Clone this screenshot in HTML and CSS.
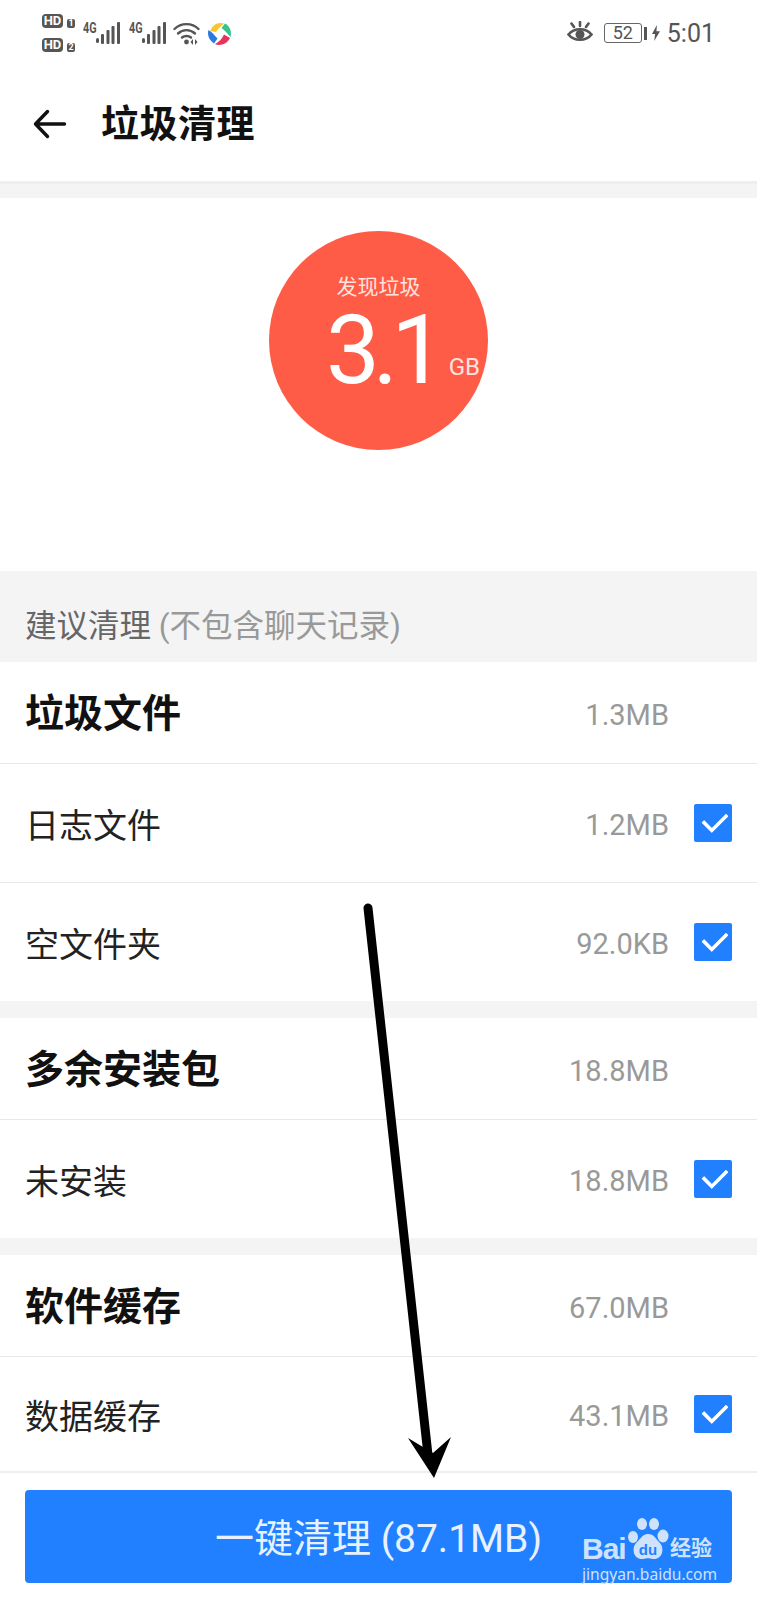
FILE: index.html
```html
<!DOCTYPE html>
<html lang="zh-CN">
<head>
  <meta charset="UTF-8">
  <title>垃圾清理</title>
  <link rel="stylesheet" href="styles.css">
</head>
<body>
  <div class="phone">

    <!-- Status bar -->
    <div class="status-bar">
      <div class="status-left">
        <div class="hd-stack">
          <div class="hd-line"><span class="hd-tag">HD</span><span class="sim-tag">1</span></div>
          <div class="hd-line"><span class="hd-tag">HD</span><span class="sim-tag">2</span></div>
        </div>
        <div class="signal"><span class="net">4G</span>
          <svg width="24" height="24" viewBox="0 0 24 24"><g fill="#555"><rect x="0" y="17" width="3" height="5" rx="1.500"/><rect x="5" y="13" width="3" height="10" rx="1"/><rect x="10.500" y="9" width="3" height="14" rx="1"/><rect x="15.500" y="5" width="3" height="18" rx="1"/><rect x="21" y="1" width="3" height="22" rx="1"/></g></svg>
        </div>
        <div class="signal"><span class="net">4G</span>
          <svg width="24" height="24" viewBox="0 0 24 24"><g fill="#555"><rect x="0" y="17" width="3" height="5" rx="1.500"/><rect x="5" y="13" width="3" height="10" rx="1"/><rect x="10.500" y="9" width="3" height="14" rx="1"/><rect x="15.500" y="5" width="3" height="18" rx="1"/><rect x="21" y="1" width="3" height="22" rx="1"/></g></svg>
        </div>
        <svg class="wifi" width="27" height="24" viewBox="0 0 27 24"><g fill="none" stroke="#555" stroke-width="2.400" stroke-linecap="round"><path d="M1.500 8C8 1.500 19 1.500 25.500 8"/><path d="M5 12.500C10 8 17 8 22 12.500"/><path d="M9 16.500C11.500 14.500 15.500 14.500 18 16.500"/></g><circle cx="13.500" cy="21" r="2.400" fill="#555"/><path d="M20 18v6l-2.500-3zM22 18v6l2.500-3z" fill="#555"/></svg>
        <svg class="app-logo" width="25" height="25" viewBox="0 0 25 25">
          <path d="M3.500 10C5 4 11 .5 17 2.500C14 5 11 8 9 11Z" fill="#f6c62f"/>
          <path d="M18 2.500C23 5 25 11 23.500 16C20 12 17.500 9 14.500 7Z" fill="#35c48d"/>
          <path d="M23 17C20 23 13 25.500 8 23C12 21 15 18 17 13.500Z" fill="#e8335d"/>
          <path d="M7 22.500C2 19 0 14 1.500 9C5 11 8 15 10.500 17.500Z" fill="#2a79e4"/>
        </svg>
      </div>
      <div class="status-right">
        <svg class="eye" width="26" height="22" viewBox="0 0 26 22"><g fill="none" stroke="#555" stroke-width="2.600"><path d="M1.500 13.500C7 6.500 19 6.500 24.500 13.500C19 20.500 7 20.500 1.500 13.500Z"/><path d="M13 1v4M4.500 2.500l2.500 3.500M21.500 2.500L19 6" stroke-linecap="round"/></g><circle cx="13" cy="13.500" r="4.500" fill="#555"/></svg>
        <div class="battery"><span class="battery-box">52</span><span class="battery-tip"></span></div>
        <svg class="bolt" width="8" height="18" viewBox="0 0 9 18"><path d="M5.500 0L0 10h3.500L2.500 18 9 7H5z" fill="#555"/></svg>
        <span class="clock">5:01</span>
      </div>
    </div>

    <!-- Title bar -->
    <div class="title-bar">
      <svg class="back" width="34" height="34" viewBox="0 0 34 34"><path d="M31.500 17H3M14.500 4.500L2.500 17L14.500 29.500" fill="none" stroke="#111" stroke-width="3.400" stroke-linecap="round" stroke-linejoin="round"/></svg>
      <h1>垃圾清理</h1>
    </div>
    <div class="band band-top"></div>

    <!-- Circle with the total -->
    <div class="hero">
      <div class="circle">
        <div class="circle-label">发现垃圾</div>
        <div class="circle-value"><span class="big">3.1</span><span class="unit">GB</span></div>
      </div>
    </div>

    <div class="section-head">建议清理 <span class="hint">(不包含聊天记录)</span></div>

    <div class="row group-row"><span class="name">垃圾文件</span><span class="size">1.3MB</span></div>
    <div class="row"><span class="name">日志文件</span><span class="size">1.2MB</span><span class="check"></span></div>
    <div class="row last"><span class="name">空文件夹</span><span class="size">92.0KB</span><span class="check"></span></div>
    <div class="band"></div>

    <div class="row group-row"><span class="name">多余安装包</span><span class="size">18.8MB</span></div>
    <div class="row last"><span class="name">未安装</span><span class="size">18.8MB</span><span class="check"></span></div>
    <div class="band"></div>

    <div class="row group-row"><span class="name">软件缓存</span><span class="size">67.0MB</span></div>
    <div class="row tail"><span class="name">数据缓存</span><span class="size">43.1MB</span><span class="check"></span></div>

    <!-- Bottom button -->
    <div class="footer">
      <button class="clean-btn">一键清理 (87.1MB)</button>
    </div>

    <!-- Arrow drawn over the screenshot -->
    <svg class="arrow" width="757" height="1600" viewBox="0 0 757 1600">
      <path d="M368 908L428 1455" fill="none" stroke="#000" stroke-width="9" stroke-linecap="round"/>
      <path d="M408 1438L434 1478L451 1437L433 1453Z" fill="#000"/>
    </svg>

    <!-- Watermark -->
    <div class="watermark">
      <div class="wm-top">
        <span class="wm-bai">Bai</span>
        <svg class="wm-paw" width="42" height="44" viewBox="0 0 42 44">
          <g fill="#cfe2fb"><ellipse cx="6" cy="19" rx="5" ry="6"/><ellipse cx="15" cy="6" rx="5" ry="6"/><ellipse cx="27" cy="6" rx="5" ry="6"/><ellipse cx="36" cy="18" rx="5.500" ry="6.500"/><path d="M21 16c6 0 8 5 12 9 5 6 2 17-7 16-4-1-6-1-10 0-9 1-12-10-7-16 4-3 6-9 12-9z"/></g>
          <text x="21" y="37" text-anchor="middle" class="wm-du">du</text>
        </svg>
        <span class="wm-cn">经验</span>
      </div>
      <div class="wm-url">jingyan.baidu.com</div>
    </div>
  </div>
</body>
</html>
```

FILE: styles.css
```css
/* Global Reset */
* {
  box-sizing: border-box;
  margin: 0;
  padding: 0;
}
body {
  font-family: Roboto, "Noto Sans CJK SC", sans-serif;
  background-color: #fff;
  color: #111;
}

.phone {
  position: relative;
  width: 757px;
  height: 1600px;
  overflow: hidden;
  background-color: #fff;
}

/* Status bar */
.status-bar {
  height: 66px;
  padding: 0 42px 0 42px;
  display: flex;
  justify-content: space-between;
  align-items: center;
}
.status-left,
.status-right {
  display: flex;
  align-items: center;
}
.hd-stack {
  display: flex;
  flex-direction: column;
  gap: 10px;
}
.hd-line {
  display: flex;
  align-items: flex-end;
  gap: 4px;
}
.hd-tag {
  background-color: #555;
  color: #fff;
  font-size: 13px;
  font-weight: 700;
  line-height: 14px;
  height: 14px;
  width: 21px;
  text-align: center;
  border-radius: 4px;
}
.sim-tag {
  background-color: #555;
  color: #fff;
  font-size: 9px;
  font-weight: 700;
  line-height: 9px;
  height: 9px;
  width: 8px;
  text-align: center;
  border-radius: 2px;
}
.signal {
  display: flex;
  align-items: flex-start;
  margin-left: 8px;
}
.signal + .signal {
  margin-left: 9px;
}
.net {
  font-size: 15px;
  font-weight: 700;
  color: #555;
  transform: scaleX(.72);
  transform-origin: left center;
  width: 13px;
  line-height: 14px;
  white-space: nowrap;
}
.wifi {
  margin-left: 7px;
}
.app-logo {
  margin-left: 7px;
}
.eye {
  margin-right: 11px;
  margin-top: -2px;
}
.battery {
  display: flex;
  align-items: center;
  gap: 2px;
}
.battery-box {
  width: 38px;
  height: 20px;
  border: 1px solid #666;
  border-radius: 3px;
  font-size: 18px;
  line-height: 18px;
  text-align: center;
  color: #555;
}
.battery-tip {
  width: 3px;
  height: 13px;
  background-color: #555;
}
.bolt {
  margin-left: 5px;
}
.clock {
  font-size: 25px;
  color: #555;
  margin-left: 7px;
}

/* Title bar */
.title-bar {
  height: 115px;
  display: flex;
  align-items: center;
  padding-left: 33px;
}
.back {
  margin-right: 34px;
}
h1 {
  font-size: 38px;
  font-weight: 700;
  line-height: 1;
  letter-spacing: .5px;
}

/* Grey gap between blocks */
.band {
  height: 17px;
  background-color: #f4f4f4;
}
.band-top {
  border-top: 3px solid #eee;
}

/* Circle block */
.hero {
  height: 373px;
  padding-top: 33px;
}
.circle {
  width: 219px;
  height: 219px;
  margin: 0 auto;
  border-radius: 50%;
  background-color: #ff5c47;
  color: #fff;
  text-align: center;
  padding-top: 42px;
}
.circle-label {
  font-size: 21px;
  line-height: 28px;
  color: #ffe3df;
}
.circle-value {
  position: relative;
  height: 96px;
  line-height: 96px;
  margin-top: 1px;
}
.big {
  display: inline-block;
  font-size: 96px;
  font-weight: 400;
  letter-spacing: -7px;
  margin-left: 7px;
}
.unit {
  position: absolute;
  right: 8px;
  top: 53px;
  font-size: 24px;
  line-height: 24px;
  color: #ffe3df;
}

/* Section heading */
.section-head {
  height: 91px;
  background-color: #f4f4f4;
  padding: 36px 0 0 25px;
  font-size: 31.500px;
  line-height: 40px;
  color: #666;
}
.hint {
  color: #999;
}

/* List rows */
.row {
  height: 119px;
  display: flex;
  align-items: center;
  padding: 4px 25px 0 25px;
  border-bottom: 1px solid #e8e8e8;
}
.row.group-row {
  height: 102px;
  padding-top: 2px;
}
.row.last {
  border-bottom: none;
  height: 118px;
}
.row.tail {
  height: 116px;
  border-bottom: 2px solid #eee;
}
.name {
  font-size: 34px;
  line-height: 44px;
  flex: 1;
  margin-top: 2px;
  color: #222;
}
.group-row .name {
  font-size: 39px;
  font-weight: 700;
  margin-top: 0;
  color: #111;
}
.size {
  font-size: 29px;
  line-height: 40px;
  color: #999;
}
.group-row .size {
  margin-top: 2px;
  margin-right: 63px;
}
.check {
  position: relative;
  width: 38px;
  height: 38px;
  margin-left: 25px;
  margin-top: -4px;
  background-color: #2080ff;
  border-radius: 2px;
}
.check::after {
  content: "";
  position: absolute;
  left: 9px;
  top: 8px;
  width: 20px;
  height: 11px;
  border-left: 4px solid #fff;
  border-bottom: 4px solid #fff;
  border-radius: 1px;
  transform: rotate(-45deg);
}

/* Footer button */
.footer {
  padding: 17px 25px 0;
}
.clean-btn {
  display: block;
  width: 707px;
  height: 93px;
  padding-bottom: 3px;
  background-color: #2080ff;
  color: #e8f2ff;
  border: none;
  border-radius: 4px;
  font-family: Roboto, "Noto Sans CJK SC", sans-serif;
  font-size: 39px;
}

/* Overlays */
.arrow {
  position: absolute;
  left: 0;
  top: 0;
  pointer-events: none;
}
.watermark {
  position: absolute;
  left: 582px;
  top: 1518px;
  width: 145px;
  color: #cfe2fb;
}
.wm-top {
  display: flex;
  align-items: flex-end;
  height: 44px;
}
.wm-bai {
  font-family: "Liberation Sans", sans-serif;
  font-size: 30px;
  font-weight: 700;
  line-height: 30px;
  letter-spacing: -1px;
  width: 45px;
  margin-bottom: -2px;
}
.wm-du {
  font-family: "Liberation Sans", sans-serif;
  font-size: 15px;
  font-weight: 700;
  fill: #2080ff;
}
.wm-cn {
  font-size: 21px;
  font-weight: 700;
  line-height: 28px;
  margin-left: 1px;
}
.wm-url {
  font-family: "Noto Sans", sans-serif;
  font-size: 15.600px;
  line-height: 20px;
  margin-top: 2px;
  white-space: nowrap;
}
```
